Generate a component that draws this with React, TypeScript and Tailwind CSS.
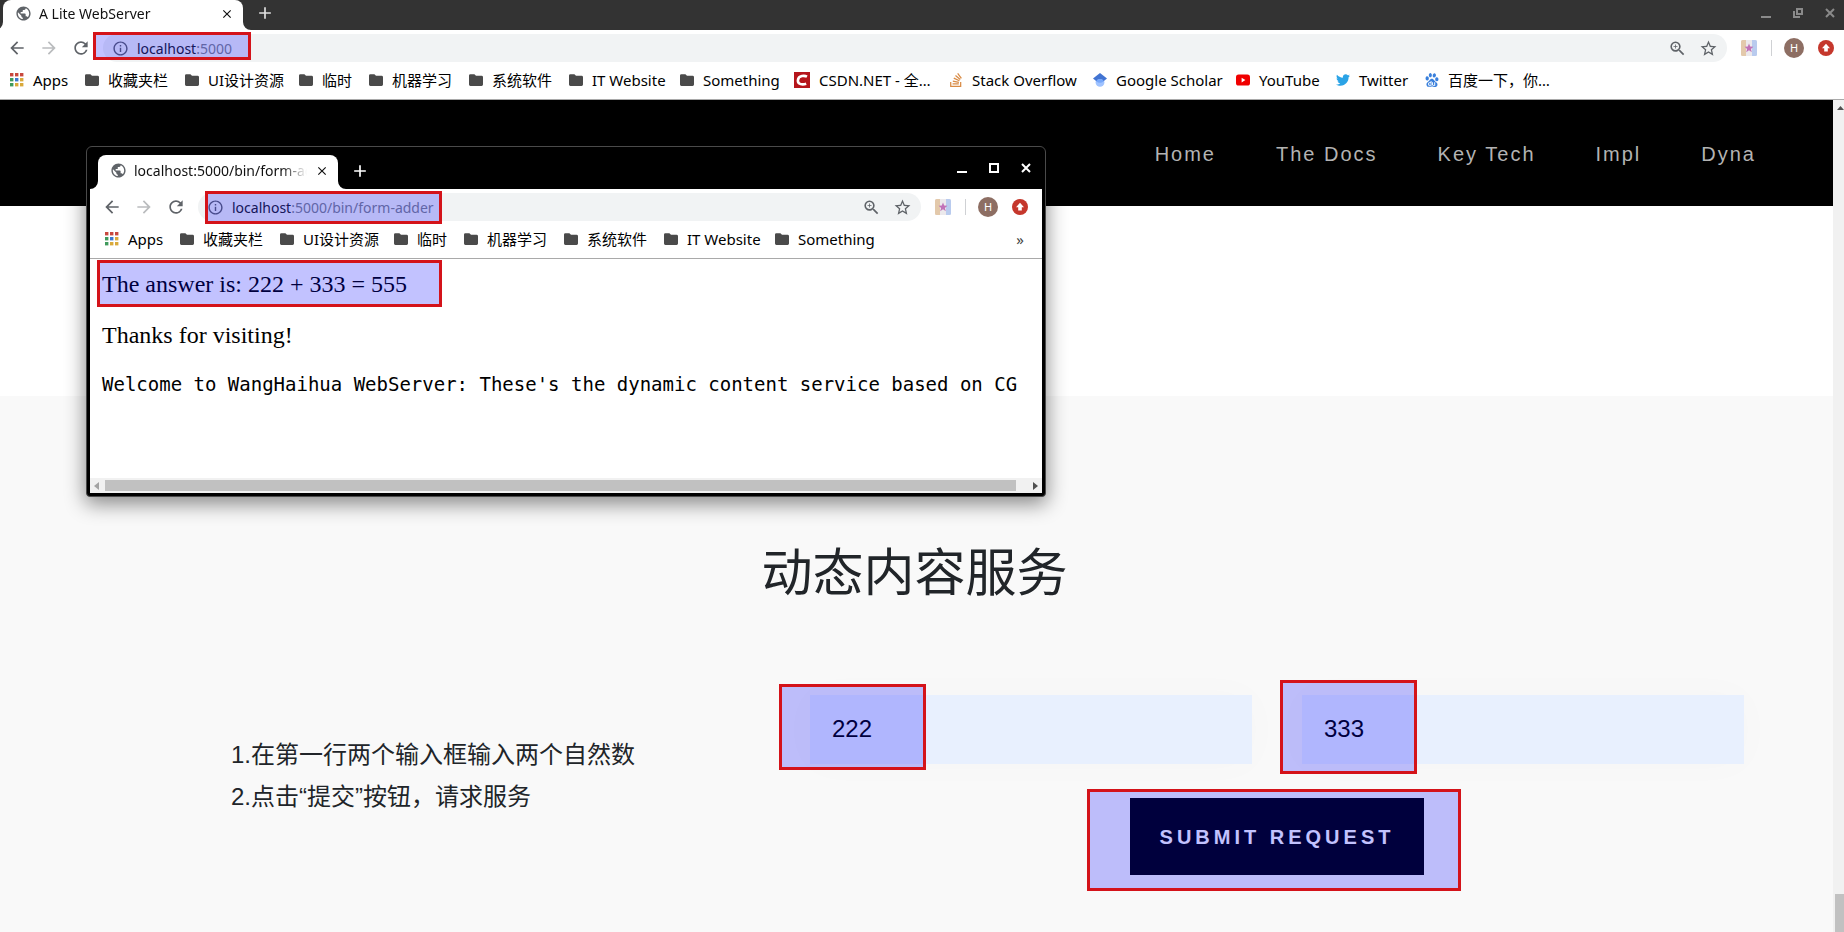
import type { ReactNode } from "react";
import {
  MdAdd,
  MdArrowBack,
  MdArrowForward,
  MdClose,
  MdInfoOutline,
  MdPublic,
  MdRefresh,
  MdStarBorder,
  MdZoomIn,
} from "react-icons/md";
import { FaTwitter } from "react-icons/fa";
import { SiBaidu, SiStackoverflow } from "react-icons/si";

function Highlight({ className }: { className: string }) {
  return (
    <span
      aria-hidden="true"
      className={`pointer-events-none absolute z-10 border-3 border-[#d4131a] bg-[#0000ff]/24 ${className}`}
    />
  );
}

function AppsIcon() {
  const colors = ["#c8483e", "#c8483e", "#c8483e", "#3f9a5c", "#3b78d0", "#d9a93a", "#3f9a5c", "#d9a93a", "#d9a93a"];
  return (
    <svg width="14" height="14" viewBox="0 0 14 14" aria-hidden="true">
      {colors.map((c, i) => (
        <rect key={i} x={(i % 3) * 5} y={Math.floor(i / 3) * 5} width="3.4" height="3.4" fill={c} />
      ))}
    </svg>
  );
}

function Folder() {
  return (
    <svg width="14" height="14" viewBox="0 0 14 14" aria-hidden="true">
      <path d="M1.4 1.2H5.4L7 2.8H12.6A1.4 1.4 0 0 1 14 4.2V11.6A1.4 1.4 0 0 1 12.6 13H1.4A1.4 1.4 0 0 1 0 11.6V2.6A1.4 1.4 0 0 1 1.4 1.2Z" fill="#4a4a4a" />
    </svg>
  );
}

function CsdnIcon() {
  return (
    <svg width="16" height="16" viewBox="0 0 16 16" aria-hidden="true">
      <rect width="16" height="16" fill="#b5151b" />
      <path d="M13 4.6C11 3.6 4.3 2.9 3.9 8.4C3.6 12.6 8.6 13 12.2 11.8" fill="none" stroke="#fff" strokeWidth="2.6" />
    </svg>
  );
}

function ScholarIcon() {
  return (
    <svg width="14" height="14" viewBox="0 0 14 14" aria-hidden="true">
      <circle cx="7" cy="9.4" r="4.4" fill="#a0c3ff" />
      <path d="M7 0L14 5.6L10.6 8.2A4 4 0 0 0 3.4 8.2L0 5.6Z" fill="#4274d2" />
      <path d="M3.2 8.2A4.4 4.4 0 0 1 10.8 8.2A6 6 0 0 1 3.2 8.2Z" fill="#76a7fa" />
    </svg>
  );
}

function YoutubeIcon() {
  return (
    <svg width="14" height="14" viewBox="0 0 14 14" aria-hidden="true">
      <rect y="1.6" width="14" height="11" rx="2.6" fill="#f00000" />
      <path d="M5.6 4.8L9.4 7.1L5.6 9.4Z" fill="#fff" />
    </svg>
  );
}

function ExtensionIcon() {
  return (
    <svg width="16" height="16" viewBox="0 0 16 16" aria-hidden="true">
      <rect width="16" height="16" rx="1.6" fill="#ece9ec" />
      <path d="M1.6 0H5V16H1.6A1.6 1.6 0 0 1 0 14.4V1.6A1.6 1.6 0 0 1 1.6 0Z" fill="#e3c9ab" />
      <path d="M11 0H14.4A1.6 1.6 0 0 1 16 1.6V14.4A1.6 1.6 0 0 1 14.4 16H11Z" fill="#b9cbee" />
      <path d="M8 3.4L9.2 6.6L12.4 6.8L9.9 8.9L10.8 12.2L8 10.3L5.2 12.2L6.1 8.9L3.6 6.8L6.8 6.6Z" fill="#c172b8" />
    </svg>
  );
}

function UpdateIcon() {
  return (
    <svg width="16" height="16" viewBox="0 0 16 16" aria-hidden="true">
      <circle cx="8" cy="8" r="8" fill="#c5372c" />
      <path d="M8 3.8L12 8.2H9.8V11.6H6.2V8.2H4Z" fill="#fff" />
    </svg>
  );
}

type Bookmark = { label: string; icon: ReactNode; width: string };

const bookmarks: Bookmark[] = [
  { label: "Apps", icon: <AppsIcon />, width: "w-[75px]" },
  { label: "收藏夹栏", icon: <Folder />, width: "w-[100px]" },
  { label: "UI设计资源", icon: <Folder />, width: "w-[114px]" },
  { label: "临时", icon: <Folder />, width: "w-[70px]" },
  { label: "机器学习", icon: <Folder />, width: "w-[100px]" },
  { label: "系统软件", icon: <Folder />, width: "w-[100px]" },
  { label: "IT Website", icon: <Folder />, width: "w-[111px]" },
  { label: "Something", icon: <Folder />, width: "w-[114px]" },
];

const siteBookmarks: Bookmark[] = [
  { label: "CSDN.NET - 全…", icon: <CsdnIcon />, width: "w-[155px]" },
  { label: "Stack Overflow", icon: <SiStackoverflow size={14} color="#d98b45" />, width: "w-[144px]" },
  { label: "Google Scholar", icon: <ScholarIcon />, width: "w-[143px]" },
  { label: "YouTube", icon: <YoutubeIcon />, width: "w-[100px]" },
  { label: "Twitter", icon: <FaTwitter size={14} color="#2aa3e6" />, width: "w-[89px]" },
  { label: "百度一下，你…", icon: <SiBaidu size={14} color="#3a80dc" />, width: "w-[128px]" },
];

function Tab({ title }: { title: string }) {
  return (
    <div className="relative flex h-full w-60 items-center rounded-t-lg bg-white pr-[9px] pb-[3px] pl-3 text-[#111]">
      <svg className="absolute bottom-0 -left-2" width="8" height="8" viewBox="0 0 8 8" aria-hidden="true">
        <path d="M8 0V8H0A8 8 0 0 0 8 0Z" fill="#fff" />
      </svg>
      <svg className="absolute -right-2 bottom-0" width="8" height="8" viewBox="0 0 8 8" aria-hidden="true">
        <path d="M0 0V8H8A8 8 0 0 1 0 0Z" fill="#fff" />
      </svg>
      <MdPublic size={17} color="#5f6368" className="shrink-0" />
      <span className="ml-[7px] flex-1 overflow-hidden mask-r-from-85% whitespace-nowrap">{title}</span>
      <button type="button" aria-label="Close tab" className="ml-2">
        <MdClose size={14} />
      </button>
    </div>
  );
}

function Toolbar({ host, path, className, mark }: { host: string; path: string; className: string; mark: string }) {
  return (
    <div className={`relative flex h-9 items-center bg-white ${className}`}>
      <div className="flex gap-3 text-[#5f6368]">
        <button type="button" aria-label="Back"><MdArrowBack size={20} /></button>
        <button type="button" aria-label="Forward" className="text-[#babcbe]"><MdArrowForward size={20} /></button>
        <button type="button" aria-label="Reload"><MdRefresh size={20} /></button>
      </div>
      <div className="ml-3 flex h-7 flex-1 items-center rounded-full bg-[#f1f3f4] pr-[9px] pl-[9px] text-[#5f6368]">
        <MdInfoOutline size={17} />
        <span className="ml-2 flex-1 whitespace-nowrap text-[#80868b]">
          <span className="text-[#202124]">{host}</span>
          {path}
        </span>
        <button type="button" aria-label="Zoom"><MdZoomIn size={19} /></button>
        <button type="button" aria-label="Bookmark this page" className="ml-3"><MdStarBorder size={19} /></button>
      </div>
      <button type="button" aria-label="Extension" className="ml-[14px]"><ExtensionIcon /></button>
      <span className="ml-[14px] h-4 w-px bg-[#cfd1d4]" />
      <span className="ml-3 flex size-5 items-center justify-center rounded-full bg-[#8d6e63] text-[11px] text-white">H</span>
      <button type="button" aria-label="Update" className="ml-[14px]"><UpdateIcon /></button>
      <Highlight className={mark} />
    </div>
  );
}

function BookmarkBar({ items, className, more }: { items: Bookmark[]; className: string; more?: boolean }) {
  return (
    <div className={`flex h-[34px] items-center border-b border-[#a9a9a9] bg-white pb-[5px] text-[15px] leading-5 text-black ${className}`}>
      {items.map((b) => (
        <a key={b.label} href="#" className={`flex shrink-0 items-center gap-[9px] whitespace-nowrap ${b.width}`}>
          <span className="shrink-0">{b.icon}</span>
          {b.label}
        </a>
      ))}
      {more && <button type="button" aria-label="More bookmarks" className="ml-auto text-[#444]">»</button>}
    </div>
  );
}

function PopupWindow() {
  return (
    <div className="absolute top-[146px] left-[86px] z-20 w-[960px] rounded-t-md rounded-b-sm border border-[#4a4a4a] bg-black px-[3px] pb-[3px] shadow-[0_6px_20px_1px_rgba(0,0,0,0.45)]">
      <div className="flex h-[42px] items-end pr-[11px] pl-2">
        <div className="h-[34px]"><Tab title="localhost:5000/bin/form-adder" /></div>
        <button type="button" aria-label="New tab" className="mb-2 ml-3 text-white"><MdAdd size={20} /></button>
        <div className="mb-4 ml-auto flex items-center gap-[22px] text-white">
          <svg width="10" height="10" viewBox="0 0 10 10" aria-hidden="true"><rect y="8" width="10" height="2" fill="currentColor" /></svg>
          <svg width="10" height="10" viewBox="0 0 10 10" aria-hidden="true"><rect x="1" y="1" width="8" height="8" fill="none" stroke="currentColor" strokeWidth="2" /></svg>
          <svg width="10" height="10" viewBox="0 0 10 10" aria-hidden="true"><path d="M1 1L9 9M9 1L1 9" stroke="currentColor" strokeWidth="2" /></svg>
        </div>
      </div>
      <Toolbar host="localhost" path=":5000/bin/form-adder" className="pr-[14px] pl-3" mark="top-[2px] left-[115px] h-[33px] w-[237px]" />
      <BookmarkBar items={bookmarks} className="pr-[18px] pl-[15px]" more />
      <div className="relative overflow-hidden bg-white pt-[11px] pb-[82px] pl-3 text-black">
        <div className="font-['Liberation_Serif',serif] text-2xl leading-7">
          <p>The answer is: 222 + 333 = 555</p>
          <p className="mt-[23px]">Thanks for visiting!</p>
        </div>
        <pre className="mt-[23px] font-['DejaVu_Sans_Mono',monospace] text-[19px] leading-6">
          Welcome to WangHaihua WebServer: These's the dynamic content service based on CG
        </pre>
        <Highlight className="top-px left-[7px] h-[47px] w-[345px]" />
      </div>
      <div className="flex h-[15px] items-center bg-[#f1f1f1] px-1">
        <svg width="5" height="8" viewBox="0 0 5 8" aria-hidden="true"><path d="M5 0V8L0 4Z" fill="#a3a3a3" /></svg>
        <div className="mr-[17px] ml-[6px] h-[11px] flex-1 bg-[#c1c1c1]" />
        <svg width="5" height="8" viewBox="0 0 5 8" aria-hidden="true"><path d="M0 0V8L5 4Z" fill="#505050" /></svg>
      </div>
    </div>
  );
}

const navLinks = ["Home", "The Docs", "Key Tech", "Impl", "Dyna"];

function NumberField({ label, value, mark }: { label: string; value: string; mark: string }) {
  return (
    <div className="relative">
      <input
        type="text"
        aria-label={label}
        defaultValue={value}
        className="h-[69px] w-full bg-[#e8f0fe] px-[22px] pb-[2px] text-2xl text-black shadow-[0_0_40px_rgba(0,0,0,0.02)] outline-none"
      />
      <Highlight className={mark} />
    </div>
  );
}

export default function App() {
  return (
    <div className="relative flex min-h-screen flex-col overflow-hidden bg-white font-['Noto_Sans','Noto_Sans_CJK_SC',sans-serif] text-[14px]">
      <div className="flex h-[30px] bg-[#333333] pr-[9px] pl-[3px]">
        <Tab title="A Lite WebServer" />
        <button type="button" aria-label="New tab" className="mb-1 ml-3 text-[#e0e0e0]"><MdAdd size={20} /></button>
        <div className="mt-2 ml-auto flex items-start gap-[22px] text-[#8a8a8a]">
          <svg width="10" height="10" viewBox="0 0 10 10" aria-hidden="true"><rect y="8" width="10" height="2" fill="currentColor" /></svg>
          <svg width="10" height="10" viewBox="0 0 10 10" aria-hidden="true">
            <path d="M4 1H9V6H4ZM1 3V9H7" fill="none" stroke="currentColor" strokeWidth="2" />
          </svg>
          <svg width="10" height="10" viewBox="0 0 10 10" aria-hidden="true"><path d="M1 1L9 9M9 1L1 9" stroke="currentColor" strokeWidth="2" /></svg>
        </div>
      </div>
      <Toolbar host="localhost" path=":5000" className="pr-[10px] pl-[7px]" mark="top-[2px] left-[93px] h-7 w-[158px]" />
      <BookmarkBar items={[...bookmarks, ...siteBookmarks]} className="pl-[10px]" />

      <div className="flex flex-1 font-['Liberation_Sans','Noto_Sans_CJK_SC',sans-serif] text-[#212529]">
        <div className="flex flex-1 flex-col">
          <nav className="flex h-[106px] items-center justify-end gap-[60px] bg-black pt-[2px] pr-[77px] text-xl tracking-widest text-[#b3b3b3]">
            {navLinks.map((l) => (
              <a key={l} href="#">{l}</a>
            ))}
          </nav>
          <section className="flex-1 bg-[#f9f9f9]">
            <div className="h-[190px] bg-white" />
            <h2 className="pt-[148px] pr-1 text-center text-[51px] leading-[60px]">动态内容服务</h2>
            <div className="grid grid-cols-[579fr_934fr] items-start pt-[91px] pr-[89px] pb-14 pl-[231px]">
              <div className="pt-[39px] text-2xl leading-[42px]">
                <p>1.在第一行两个输入框输入两个自然数</p>
                <p>2.点击“提交”按钮，请求服务</p>
              </div>
              <form onSubmit={(e) => e.preventDefault()}>
                <div className="grid grid-cols-2 gap-[50px]">
                  <NumberField label="First number" value="222" mark="-top-[11px] -left-[31px] h-[86px] w-[147px]" />
                  <NumberField label="Second number" value="333" mark="-top-[15px] -left-[22px] h-[94px] w-[137px]" />
                </div>
                <div className="mt-[34px] flex justify-center">
                  <div className="relative">
                    <button type="submit" className="h-[77px] bg-black px-[30px] text-xl font-bold tracking-[4px] text-white">
                      SUBMIT REQUEST
                    </button>
                    <Highlight className="-top-[9px] -right-[37px] -left-[43px] h-[102px]" />
                  </div>
                </div>
              </form>
            </div>
          </section>
        </div>
        <div className="flex w-[11px] flex-col items-end justify-between bg-[#f1f1f1] pt-[6px]">
          <svg width="7" height="4" viewBox="0 0 7 4" aria-hidden="true"><path d="M0 4L3.5 0L7 4Z" fill="#505050" /></svg>
          <div className="h-[38px] w-[9px] bg-[#c1c1c1]" />
        </div>
      </div>

      <PopupWindow />
    </div>
  );
}
